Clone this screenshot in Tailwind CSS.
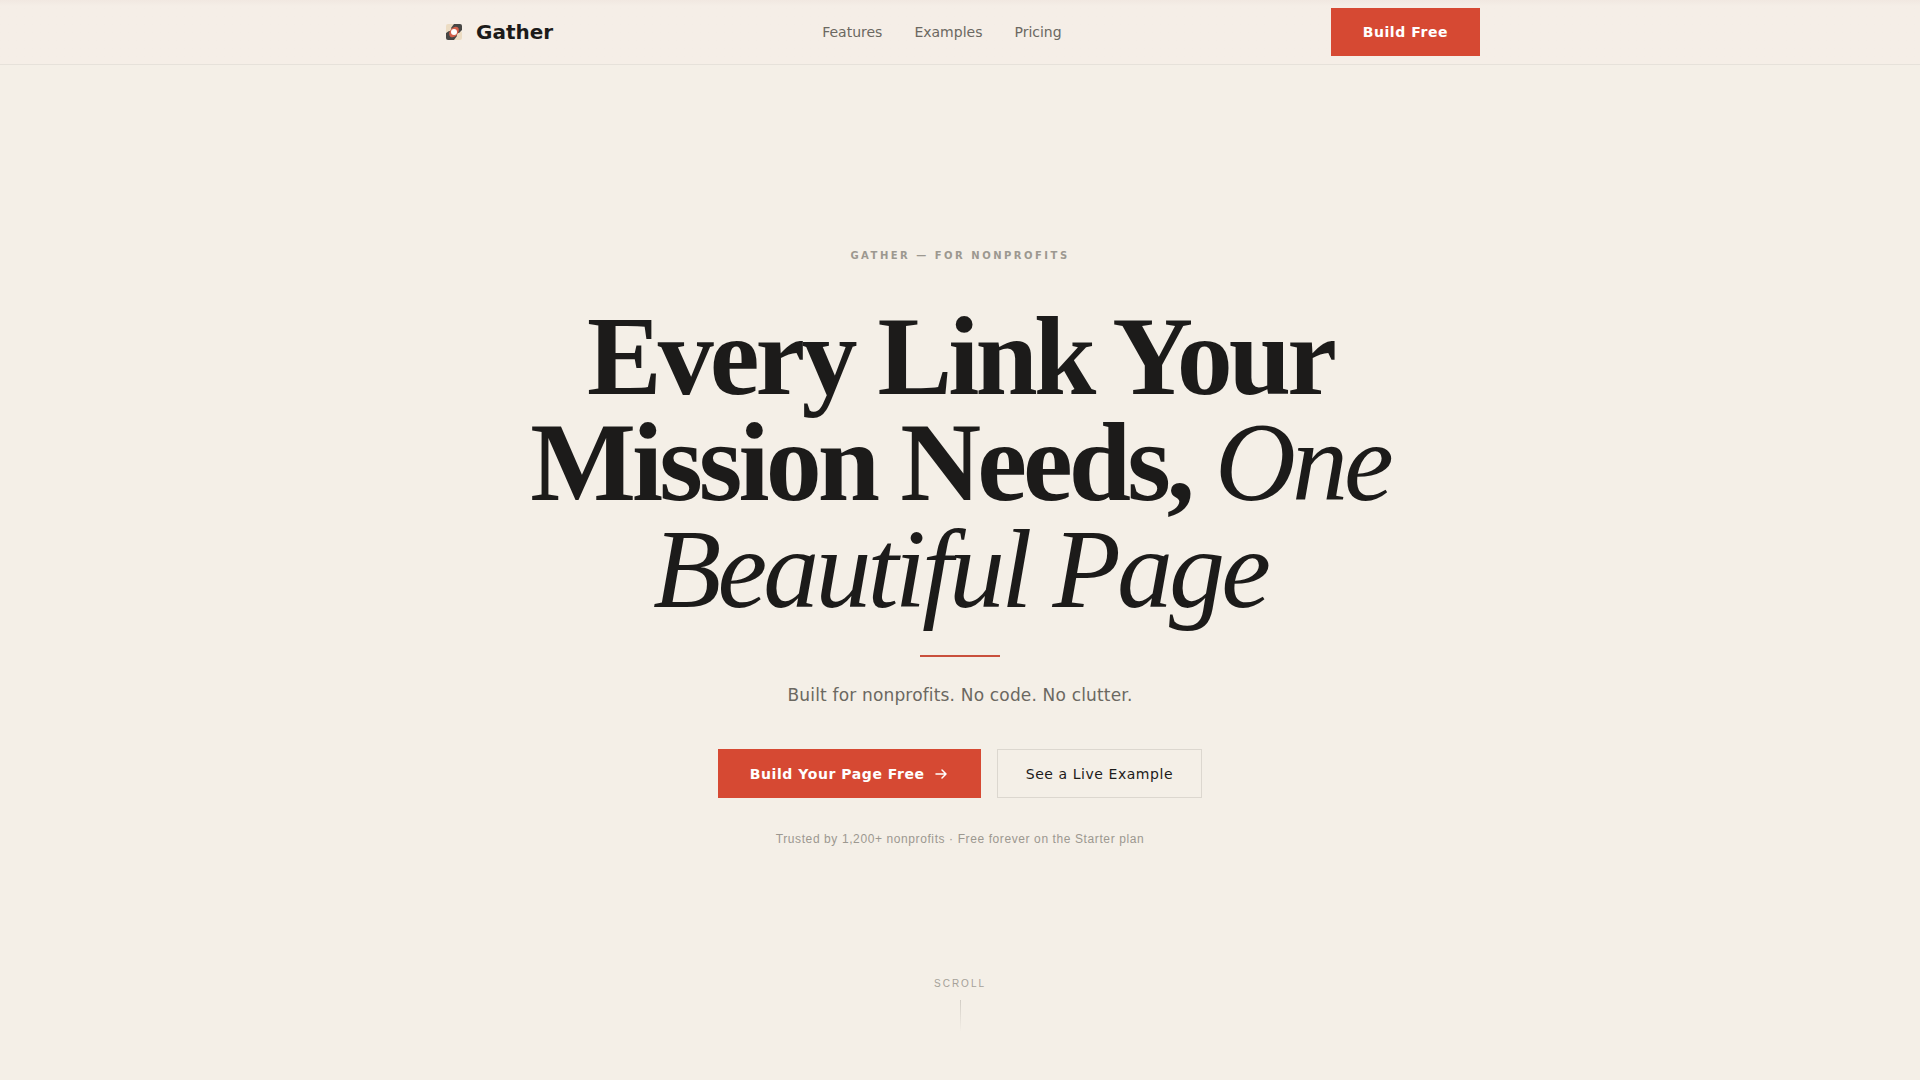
<!DOCTYPE html>
<html lang="en">
<head>
  <meta charset="UTF-8" />
  <meta name="viewport" content="width=device-width, initial-scale=1.0" />
  <title>Gather — For Nonprofits</title>
  <script src="https://cdn.jsdelivr.net/npm/@tailwindcss/browser@4"></script>
</head>
<body class="bg-[#f4efe7] text-[#1c1b1a] min-h-screen flex flex-col font-['DejaVu_Sans',sans-serif]">

  <!-- Navbar -->
  <header class="bg-linear-to-b from-[#f1e8e1] to-[#f5eee7] to-[6px] border-b border-[#e6e1da] px-6">
    <nav class="max-w-[1040px] h-16 mx-auto flex items-center justify-between">
      <a href="#" class="flex items-center gap-2 text-xl font-bold">
        <svg class="w-7 h-7" viewBox="0 0 28 28" fill="none">
          <rect x="6" y="6" width="9" height="9" rx="2" fill="#ecdcc3"/>
          <rect x="13" y="13" width="9" height="9" rx="2" fill="#ecdcc3"/>
          <path d="M14 6h6a2 2 0 0 1 2 2v4l-3 3h-5l-3-5z" fill="#474645"/>
          <path d="M6 15l3-2h6l2 5-3 4H8a2 2 0 0 1-2-2z" fill="#474645"/>
          <ellipse cx="14" cy="14" rx="4" ry="6" transform="rotate(38 14 14)" fill="#d4604b"/>
          <circle cx="14" cy="14" r="3" fill="#fff"/>
        </svg>
        Gather
      </a>
      <div class="flex gap-8 text-sm text-[#6b6861]">
        <a href="#features">Features</a>
        <a href="#examples">Examples</a>
        <a href="#pricing">Pricing</a>
      </div>
      <a href="#build" class="h-12 px-8 flex items-center bg-[#d64933] text-white text-sm font-bold tracking-[0.04em]">Build Free</a>
    </nav>
  </header>

  <!-- Hero -->
  <main class="flex-1 flex flex-col items-center text-center px-6 pt-[183px]">
    <p class="text-[10px] leading-4 font-bold tracking-[0.25em] uppercase text-[#9c9890]">Gather — For Nonprofits</p>
    <h1 class="mt-[39px] max-w-[900px] font-['Liberation_Serif',serif] text-[112px] leading-[0.95] font-bold tracking-[-0.035em]">
      Every Link Your Mission Needs, <em class="font-normal">One Beautiful Page</em>
    </h1>
    <div class="mt-[33px] w-20 h-0.5 bg-[#c9503c]"></div>
    <p class="mt-6 text-[17px] leading-7 tracking-[0.01em] text-[#6b6861]">Built for nonprofits. No code. No clutter.</p>
    <div class="mt-10 flex gap-4 text-sm">
      <a href="#build" class="h-[49px] px-8 flex items-center gap-2 bg-[#d64933] text-white font-bold tracking-[0.04em]">
        Build Your Page Free
        <svg class="w-4 h-4" viewBox="0 0 16 16" fill="none" stroke="currentColor" stroke-width="1.5" stroke-linecap="round" stroke-linejoin="round">
          <path d="M3 8h10M9 4l4 4-4 4"/>
        </svg>
      </a>
      <a href="#examples" class="h-[49px] px-7 flex items-center border border-[#dcd7cf] tracking-[0.04em]">See a Live Example</a>
    </div>
    <p class="mt-[33px] font-['Liberation_Sans',sans-serif] text-xs tracking-[0.05em] text-[#9c9890]">Trusted by 1,200+ nonprofits · Free forever on the Starter plan</p>
  </main>

  <!-- Scroll hint -->
  <footer class="pb-12 flex flex-col items-center gap-2 font-['Liberation_Sans',sans-serif]">
    <span class="text-[10px] leading-4 tracking-[0.2em] uppercase text-[#a5a199]">Scroll</span>
    <div class="w-px h-8 bg-linear-to-b from-[#d2cdc5] to-transparent"></div>
  </footer>

</body>
</html>
